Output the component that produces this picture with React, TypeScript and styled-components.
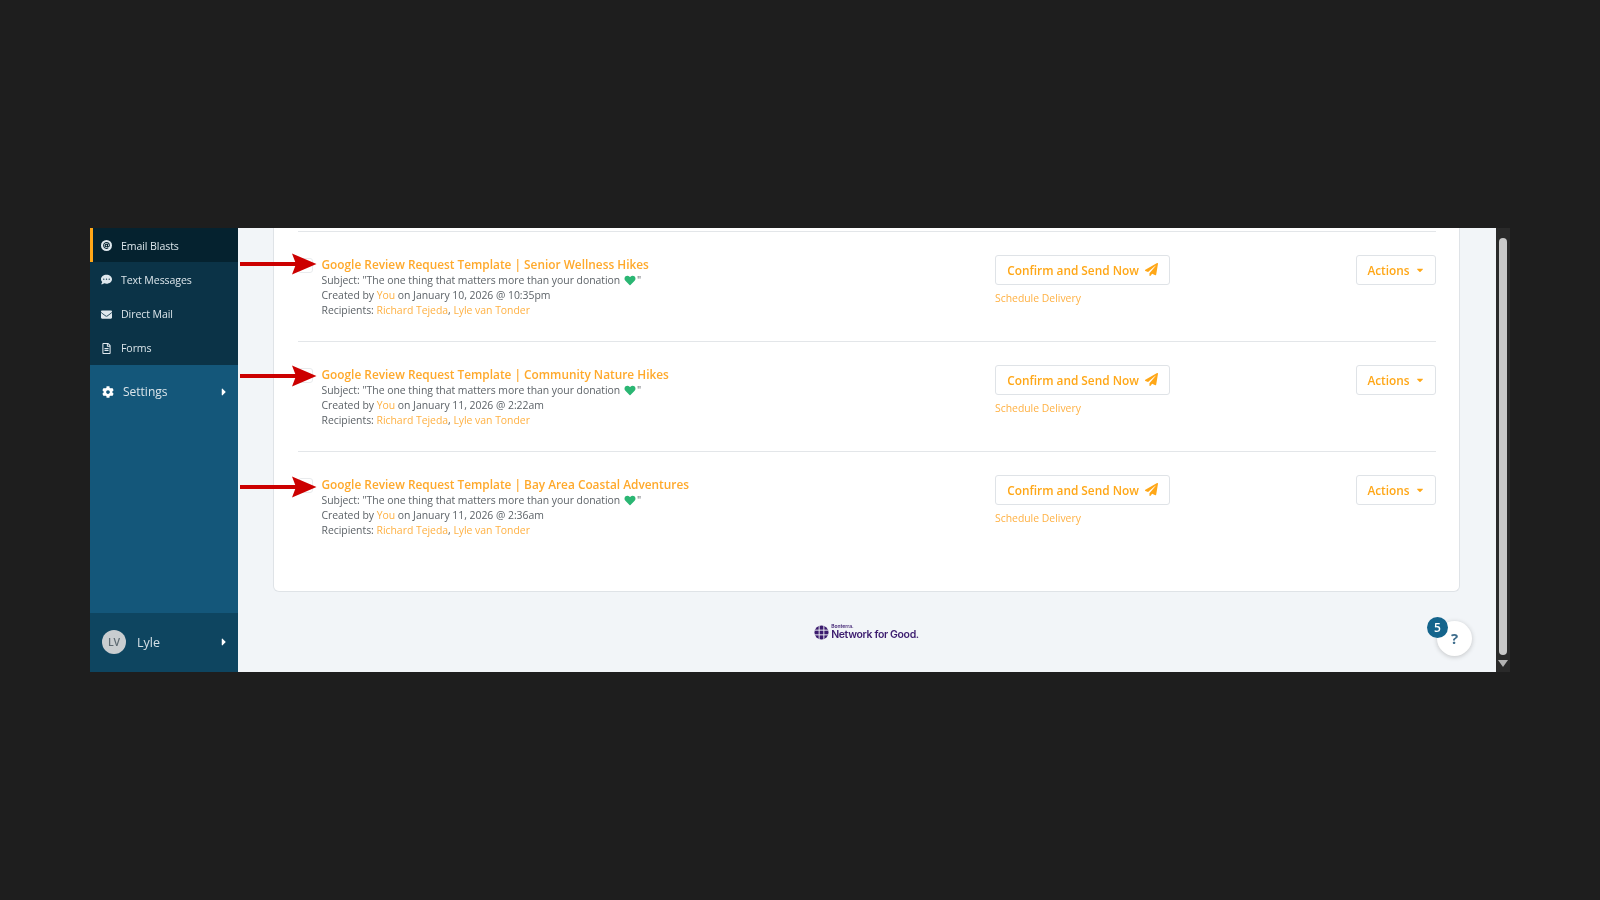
import React from "react";
import styled, { createGlobalStyle } from "styled-components";
import { FaCaretDown, FaCaretRight, FaCog, FaCommentDots, FaEnvelope, FaHeart, FaPaperPlane, FaRegFileAlt, FaAt } from "react-icons/fa";

const Global = createGlobalStyle`
  html, body { margin: 0; padding: 0; background: #1e1e1e; width: 1600px; height: 900px; overflow: hidden; }
  body { font-family: "Open Sans", "Liberation Sans", sans-serif; }
`;
const Stage = styled.div`
  width: 1600px; height: 900px; padding: 228px 0 0 90px; box-sizing: border-box; display: flex; align-items: flex-start;
`;
const Shell = styled.div`
  display: flex; height: 443.5px; filter: blur(0.45px);
`;
const Sidebar = styled.nav`
  width: 148px; display: flex; flex-direction: column; background: #14577a;
`;
const NavGroup = styled.div`background: #0b3347;`;
const NavItem = styled.div<{ $active?: boolean }>`
  height: 34.25px; display: flex; align-items: center; gap: 9px; box-sizing: border-box; padding-top: 1px;
  font-size: 10.6px; letter-spacing: -0.1px; color: #dbe5ea;
  background: ${p => p.$active ? "#05222f" : "transparent"};
  border-left: ${p => p.$active ? "3px solid #ffa617" : "0"};
  padding-left: ${p => p.$active ? "8px" : "11px"};
  svg { width: 11px; height: 11px; color: #dfe8ee; flex: none; }
`;
const GlobeDot = styled.span`
  width: 11px; height: 11px; border-radius: 50%; background: #dfe8ee; display: flex; align-items: center; justify-content: center; flex: none;
  svg { width: 7px; height: 7px; color: #05222f; }
`;
const SettingsRow = styled.div`
  height: 53px; display: flex; align-items: center; padding: 0 8px 0 12px; box-sizing: border-box; color: #dbe5ea; font-size: 12px;
  svg:first-child { width: 12px; height: 12px; margin-right: 9px; color: #fff; }
  span { flex: 1; }
  svg:last-child { width: 12px; height: 12px; color: #fff; }
`;
const SideSpacer = styled.div`flex: 1;`;
const UserRow = styled.div`
  height: 59px; display: flex; align-items: center; padding: 0 8px 0 12px; background: #0e4560; color: #d5e0e6; font-size: 12.5px;
  span { flex: 1; }
  svg { width: 12px; height: 12px; color: #fff; }
`;
const Avatar = styled.div`
  width: 24px; height: 24px; border-radius: 50%; background: #c9cdd0; color: #5e6a72; font-size: 10.5px; font-weight: 600;
  display: flex; align-items: center; justify-content: center; margin-right: 11px;
`;
const Main = styled.main`
  width: 1258px; background: #f2f5f8; position: relative; display: flex; flex-direction: column; padding: 0 36px 0 35px; box-sizing: border-box;
`;
const Card = styled.section`
  height: 364px; background: #fff; border: 1px solid #dfe3e7; border-top: 0; border-radius: 0 0 6px 6px; box-sizing: border-box;
  padding: 3px 23px 0 24px; flex: none;
`;
const Row = styled.article`
  height: 110px; box-sizing: border-box; border-top: 1.5px solid #e3e6e9; padding: 24px 0 0 0; display: flex; position: relative;
`;
const Checkbox = styled.div`
  width: 15px; height: 15px; box-sizing: border-box; border: 1px solid #e9ebed; border-radius: 3px; margin: 2px 8.5px 0 0; flex: none;
`;
const Info = styled.div`
  width: 673.5px; flex: none; font-size: 10.45px; line-height: 14.7px; color: #5d6368; letter-spacing: -0.03px;
`;
const Title = styled.div`
  color: #ffa92b; font-size: 11.85px; font-weight: 600; line-height: 17px; margin-bottom: 0.2px; letter-spacing: 0;
`;
const Link = styled.span`color: #ffb143;`;
const Heart = styled(FaHeart)`
  width: 12px; height: 11px; color: #2bb673; margin: 0 1px 0 1px; vertical-align: -2px;
`;
const ActionCol = styled.div`
  flex: 1; display: flex; flex-direction: column; align-items: flex-start; margin-top: -1.5px;
`;
const Button = styled.div`
  height: 30px; box-sizing: border-box; border: 1.5px solid #dfe3e7; border-radius: 3px; background: #fff; color: #ffa717;
  font-size: 11.85px; font-weight: 600; display: flex; align-items: center; justify-content: center; gap: 6px; white-space: nowrap;
`;
const SendButton = styled(Button)`
  width: 175px;
  svg { width: 13px; height: 13px; }
`;
const Schedule = styled.div`
  margin-top: 6px; font-size: 10.4px; line-height: 15px; color: #ffb143;
`;
const MenuCol = styled.div`
  width: 80px; margin-top: -1.5px; flex: none;
`;
const ActionsButton = styled(Button)`
  width: 80px; gap: 5px;
  svg { width: 10px; height: 10px; }
`;
const ArrowOverlay = styled.svg<{ $top: number }>`
  position: absolute; left: -58.5px; top: ${p => p.$top}px; width: 78px; height: 26px; overflow: visible;
`;
const Footer = styled.footer`
  flex: 1; display: flex; align-items: center; justify-content: center; padding-top: 1px;
`;
const Logo = styled.div`
  display: flex; align-items: center; gap: 2px; color: #3b1b6e;
  svg { width: 15px; height: 15px; }
`;
const LogoText = styled.div`
  display: flex; flex-direction: column; font-family: "Inter", "Liberation Sans", sans-serif; font-weight: 600;
  small { font-size: 5px; line-height: 5px; font-weight: 600; }
  b { font-size: 10.5px; line-height: 11px; letter-spacing: -0.35px; font-weight: 600; }
`;
const Help = styled.div`
  position: absolute; left: 1199px; bottom: 16px; width: 35px; height: 35px; border-radius: 50%; background: #fff; box-shadow: 0 1px 5px rgba(0,0,0,.2);
  color: #3e6d8c; font-weight: 700; font-size: 15px; display: flex; align-items: center; justify-content: center; padding-bottom: 1px; box-sizing: border-box;
`;
const Badge = styled.div`
  position: absolute; left: -10px; top: -4px; width: 21px; height: 21px; border-radius: 50%; background: #14648c; color: #fff; font-size: 12px; font-weight: 600;
  display: flex; align-items: center; justify-content: center;
`;
const Scrollbar = styled.div`
  width: 14px; background: #2a2a2a; display: flex; flex-direction: column; align-items: center; padding-top: 10px; box-sizing: border-box;
`;
const Thumb = styled.div`width: 8px; height: 417px; border-radius: 4px; background: #c9c9c9;`;
const ScrollArrow = styled.div`
  margin-top: 5px; width: 0; height: 0; border-left: 5px solid transparent; border-right: 5px solid transparent; border-top: 7px solid #b4b4b4;
`;

const Arrow = ({ top }: { top: number }) => (
  <ArrowOverlay $top={top} viewBox="0 0 78 26">
    <rect x="0" y="11" width="56" height="4" fill="#cc0000" />
    <path d="M52 2.5 L76.5 13 L52 23.5 L56 13 Z" fill="#cc0000" />
  </ArrowOverlay>
);

const LogoMark = () => (
  <svg viewBox="0 0 16 16">
    <circle cx="8" cy="8" r="7.5" fill="#3b1b6e" />
    <path d="M5.5 0.5V15.5M10.5 0.5V15.5M0.5 5.5H15.5M0.5 10.5H15.5" stroke="#f2f5f8" strokeWidth="1" />
  </svg>
);

const items: [string, string, number][] = [
  ["Senior Wellness Hikes", "January 10, 2026 @ 10:35pm", 18.5],
  ["Community Nature Hikes", "January 11, 2026 @ 2:22am", 20.5],
  ["Bay Area Coastal Adventures", "January 11, 2026 @ 2:36am", 21.5],
];

export default function App() {
  return (
    <Stage>
      <Global />
      <Shell>
        <Sidebar>
          <NavGroup>
            <NavItem $active><GlobeDot><FaAt /></GlobeDot>Email Blasts</NavItem>
            <NavItem><FaCommentDots />Text Messages</NavItem>
            <NavItem><FaEnvelope />Direct Mail</NavItem>
            <NavItem><FaRegFileAlt />Forms</NavItem>
          </NavGroup>
          <SettingsRow><FaCog /><span>Settings</span><FaCaretRight /></SettingsRow>
          <SideSpacer />
          <UserRow><Avatar>LV</Avatar><span>Lyle</span><FaCaretRight /></UserRow>
        </Sidebar>
        <Main>
          <Card>
            {items.map(([name, date, top]) => (
              <Row key={name}>
                <Checkbox />
                <Arrow top={top} />
                <Info>
                  <Title>Google Review Request Template | {name}</Title>
                  <div>Subject: "The one thing that matters more than your donation <Heart />"</div>
                  <div>Created by <Link>You</Link> on {date}</div>
                  <div>Recipients: <Link>Richard Tejeda</Link>, <Link>Lyle van Tonder</Link></div>
                </Info>
                <ActionCol>
                  <SendButton>Confirm and Send Now <FaPaperPlane /></SendButton>
                  <Schedule>Schedule Delivery</Schedule>
                </ActionCol>
                <MenuCol>
                  <ActionsButton>Actions <FaCaretDown /></ActionsButton>
                </MenuCol>
              </Row>
            ))}
          </Card>
          <Footer>
            <Logo>
              <LogoMark />
              <LogoText><small>Bonterra.</small><b>Network for Good.</b></LogoText>
            </Logo>
          </Footer>
          <Help>?<Badge>5</Badge></Help>
        </Main>
        <Scrollbar><Thumb /><ScrollArrow /></Scrollbar>
      </Shell>
    </Stage>
  );
}
